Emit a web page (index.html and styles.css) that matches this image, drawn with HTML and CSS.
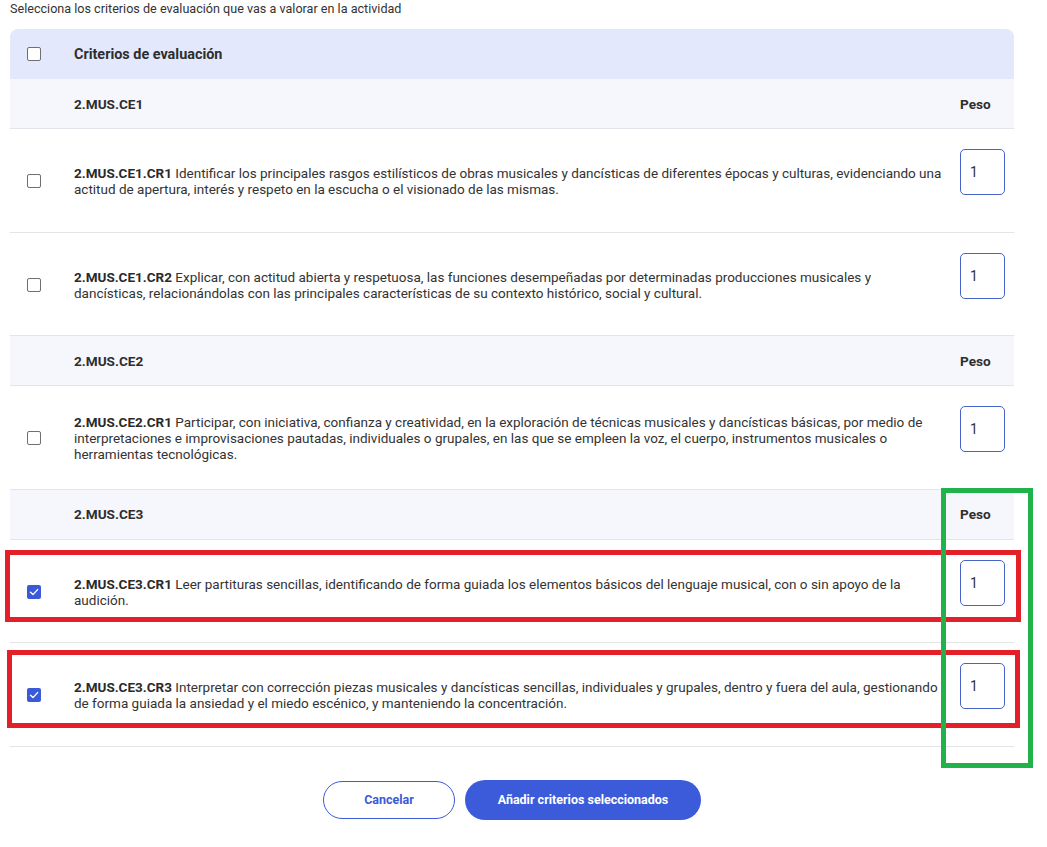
FILE: index.html
```html
<!DOCTYPE html>
<html lang="es">
<head>
<meta charset="utf-8">
<title>Criterios de evaluación</title>
<link rel="stylesheet" href="styles.css">
</head>
<body>
<div class="page">
  <p class="intro">Selecciona los criterios de evaluación que vas a valorar en la actividad</p>

  <div class="table">
    <div class="row head">
      <div class="cell-check"><span class="cb"></span></div>
      <div class="cell-text">Criterios de evaluación</div>
      <div class="cell-peso"></div>
    </div>

    <div class="row group">
      <div class="cell-check"></div>
      <div class="cell-text">2.MUS.CE1</div>
      <div class="cell-peso">Peso</div>
    </div>
    <div class="row item">
      <div class="cell-check"><span class="cb"></span></div>
      <div class="cell-text"><b>2.MUS.CE1.CR1</b> Identificar los principales rasgos estilísticos de obras musicales y dancísticas de diferentes épocas y culturas, evidenciando una actitud de apertura, interés y respeto en la escucha o el visionado de las mismas.</div>
      <div class="cell-input"><span class="num">1</span></div>
    </div>
    <div class="row item">
      <div class="cell-check"><span class="cb"></span></div>
      <div class="cell-text"><b>2.MUS.CE1.CR2</b> Explicar, con actitud abierta y respetuosa, las funciones desempeñadas por determinadas producciones musicales y dancísticas, relacionándolas con las principales características de su contexto histórico, social y cultural.</div>
      <div class="cell-input"><span class="num">1</span></div>
    </div>

    <div class="row group">
      <div class="cell-check"></div>
      <div class="cell-text">2.MUS.CE2</div>
      <div class="cell-peso">Peso</div>
    </div>
    <div class="row item">
      <div class="cell-check"><span class="cb"></span></div>
      <div class="cell-text"><b>2.MUS.CE2.CR1</b> Participar, con iniciativa, confianza y creatividad, en la exploración de técnicas musicales y dancísticas básicas, por medio de interpretaciones e improvisaciones pautadas, individuales o grupales, en las que se empleen la voz, el cuerpo, instrumentos musicales o herramientas tecnológicas.</div>
      <div class="cell-input"><span class="num">1</span></div>
    </div>

    <div class="row group">
      <div class="cell-check"></div>
      <div class="cell-text">2.MUS.CE3</div>
      <div class="cell-peso">Peso</div>
    </div>
    <div class="row item">
      <div class="cell-check"><span class="cb checked"><svg viewBox="0 0 14 14" width="14" height="14"><path d="M3.5 7.2 L6 9.6 L10.6 4.6" fill="none" stroke="#fff" stroke-width="1.4" stroke-linecap="round" stroke-linejoin="round"/></svg></span></div>
      <div class="cell-text"><b>2.MUS.CE3.CR1</b> Leer partituras sencillas, identificando de forma guiada los elementos básicos del lenguaje musical, con o sin apoyo de la audición.</div>
      <div class="cell-input"><span class="num">1</span></div>
    </div>
    <div class="row item">
      <div class="cell-check"><span class="cb checked"><svg viewBox="0 0 14 14" width="14" height="14"><path d="M3.5 7.2 L6 9.6 L10.6 4.6" fill="none" stroke="#fff" stroke-width="1.4" stroke-linecap="round" stroke-linejoin="round"/></svg></span></div>
      <div class="cell-text"><b>2.MUS.CE3.CR3</b> Interpretar con corrección piezas musicales y dancísticas sencillas, individuales y grupales, dentro y fuera del aula, gestionando de forma guiada la ansiedad y el miedo escénico, y manteniendo la concentración.</div>
      <div class="cell-input"><span class="num">1</span></div>
    </div>
  </div>

  <div class="actions">
    <button class="btn btn-outline">Cancelar</button>
    <button class="btn btn-primary">Añadir criterios seleccionados</button>
  </div>
</div>

<div class="mark mark-red mark-r1"></div>
<div class="mark mark-red mark-r2"></div>
<div class="mark mark-green"></div>
</body>
</html>
```

FILE: styles.css
```css
* { box-sizing: border-box; }
html, body { margin: 0; padding: 0; background: #fff; }
body {
  font-family: Roboto, "Liberation Sans", Arial, sans-serif;
  color: #2e2e2e;
  position: relative;
  min-height: 847px;
}
.page { padding: 0 33px 0 10px; }
.intro {
  margin: 0 0 11px;
  font-size: 12.6px;
  line-height: 18px;
  color: #333;
}
.table { width: 1004px; }
.row {
  display: grid;
  grid-template-columns: 49px 1fr 45px;
  column-gap: 15px;
  align-items: center;
  padding-right: 9px;
}
.head {
  height: 50px;
  background: #e3e8fc;
  border-radius: 8px 8px 0 0;
  font-weight: 700;
  font-size: 14.4px;
}
.group {
  height: 50px;
  background: #f5f7fd;
  border-bottom: 1px solid #e2e4e9;
  font-weight: 700;
  font-size: 13.6px;
}
.group:first-of-type { height: 49px; }
.item {
  padding-top: 20px;
  padding-bottom: 18.6px;
  border-bottom: 1px solid #e2e4e9;
  font-size: 13.5px;
  line-height: 16px;
  color: #333;
}
.cell-check { padding-left: 17px; display: flex; align-items: center; }
.cell-text b { font-weight: 700; color: #2a2a2a; }
.cell-peso { font-size: 13.6px; font-weight: 700; }
.cb {
  display: block;
  width: 14px;
  height: 14px;
  border: 1px solid #6f6f6f;
  border-radius: 2px;
  background: #fff;
}
.cb.checked {
  border: none;
  background: #3a5bd8;
  border-radius: 2px;
}
.cb svg { display: block; }
.cell-input { padding-bottom: 18px; }
.num {
  display: flex;
  align-items: center;
  width: 45px;
  height: 46px;
  border: 1px solid #4563c9;
  border-radius: 5px;
  padding-left: 9px;
  font-size: 14px;
  color: #333;
}
.actions {
  width: 1004px;
  display: flex;
  justify-content: center;
  align-items: center;
  gap: 10px;
  margin-top: 33px;
}
.btn {
  font-family: Roboto, "Liberation Sans", Arial, sans-serif;
  font-size: 12.5px;
  font-weight: 700;
  border-radius: 20px;
  cursor: pointer;
}
.btn-outline {
  width: 132px;
  height: 38px;
  background: #fff;
  color: #3d5ad6;
  border: 1px solid #3d5ad6;
}
.btn-primary {
  width: 236px;
  height: 40px;
  background: #3b5bdb;
  color: #fff;
  border: none;
}
.mark { position: absolute; pointer-events: none; }
.mark-red { border: 5px solid #e3202a; }
.mark-r1 { left: 5px; top: 550px; width: 1016px; height: 72px; }
.mark-r2 { left: 7px; top: 650px; width: 1013px; height: 78px; }
.mark-green { left: 941px; top: 488px; width: 92px; height: 280px; border: 5px solid #22b24c; }
```
